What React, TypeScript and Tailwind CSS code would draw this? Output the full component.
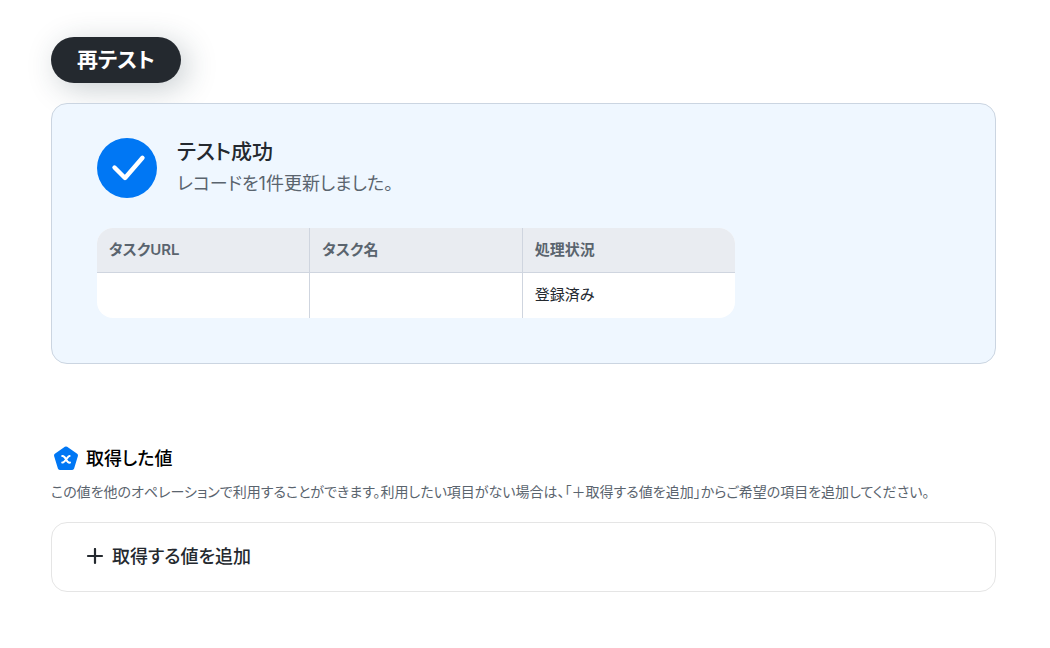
interface ResultRow {
  id: string;
  url: string;
  name: string;
  status: string;
}

const columns = ["タスクURL", "タスク名", "処理状況"];

const rows: ResultRow[] = [{ id: "row-1", url: "", name: "", status: "登録済み" }];

const CheckCircle = () => (
  <svg viewBox="0 0 60 60" className="size-[60px] shrink-0" aria-hidden="true">
    <circle cx="30" cy="30" r="30" fill="#0077f4" />
    <path
      d="M17.500 29.500L28 40L45.500 19.800"
      fill="none"
      stroke="#fff"
      strokeWidth="4.400"
      strokeLinecap="round"
      strokeLinejoin="round"
    />
  </svg>
);

const ValueIcon = () => (
  <svg viewBox="0 0 30 30" className="size-[30px] shrink-0" aria-hidden="true">
    <path
      d="M15 4.500L25 11.500L21.200 24H8.800L5 11.500Z"
      fill="#0077f4"
      stroke="#0077f4"
      strokeWidth="4"
      strokeLinejoin="round"
    />
    {/* Curly x */}
    <path
      d="M11.200 12C13 11.600 13.700 12.800 15 15.200C16.300 17.800 17 19 19 18.600M18.600 12C16.800 11.800 13.500 18.800 11.200 18.600"
      fill="none"
      stroke="#fff"
      strokeWidth="2"
      strokeLinecap="round"
    />
  </svg>
);

const TestResult = () => (
  <section className="mt-5 rounded-2xl border border-[#cbd5e1] bg-[#eff7ff] px-[45px] pt-[34px] pb-[45px]">
    <div className="flex items-center gap-5">
      <CheckCircle />
      <div className="flex flex-col gap-1">
        <h2 className="text-[21px] leading-7 font-medium">テスト成功</h2>
        <p className="text-[18px] leading-7 text-[#5a646e]">レコードを1件更新しました。</p>
      </div>
    </div>

    <div className="mt-[30px] max-w-[638px] overflow-hidden rounded-2xl bg-white">
      <table className="w-full table-fixed border-collapse text-left text-[15px] leading-5">
        <thead className="bg-[#e9ecf1] text-[#5a646e]">
          <tr>
            {columns.map((column) => (
              <th key={column} className="h-11 border-r border-b border-[#cfd5df] px-3 font-semibold last:border-r-0">
                {column}
              </th>
            ))}
          </tr>
        </thead>
        <tbody>
          {rows.map((row) => (
            <tr key={row.id}>
              <td className="h-[46px] border-r border-[#cfd5df] px-3">{row.url}</td>
              <td className="border-r border-[#cfd5df] px-3">{row.name}</td>
              <td className="px-3">{row.status}</td>
            </tr>
          ))}
        </tbody>
      </table>
    </div>
  </section>
);

const OutputValues = () => (
  <section className="mt-20">
    <div className="flex items-center gap-[5px]">
      <ValueIcon />
      <h2 className="text-[18px] leading-7 font-medium text-black">取得した値</h2>
    </div>
    <p className="mt-1.5 text-[14px] leading-6 text-[#5a646e]">
      この値を他のオペレーションで利用することができます。利用したい項目がない場合は、「＋取得する値を追加」からご希望の項目を追加してください。
    </p>
    <div className="mt-[18px] rounded-2xl border border-[#e5e5e5] px-[34px] py-5">
      <button type="button" className="flex items-center gap-2 text-[18px] leading-7 font-medium">
        <svg viewBox="0 0 18 18" className="size-[18px]" aria-hidden="true">
          <path d="M9 1V15M2 8H16" stroke="currentColor" strokeWidth="2.200" strokeLinecap="round" />
        </svg>
        取得する値を追加
      </button>
    </div>
  </section>
);

export default function App() {
  return (
    <main
      lang="ja"
      className="bg-white pt-[37px] pr-[54px] pb-14 pl-[51px] font-['Inter','Noto_Sans_CJK_JP',sans-serif] text-[#24292f] [font-feature-settings:'palt']"
    >
      <button
        type="button"
        className="block h-[46px] rounded-full bg-[#24292f] px-[26px] text-[21px] font-bold text-white shadow-[6px_6px_30px_rgba(36,60,70,0.25)]"
      >
        再テスト
      </button>
      <TestResult />
      <OutputValues />
    </main>
  );
}
